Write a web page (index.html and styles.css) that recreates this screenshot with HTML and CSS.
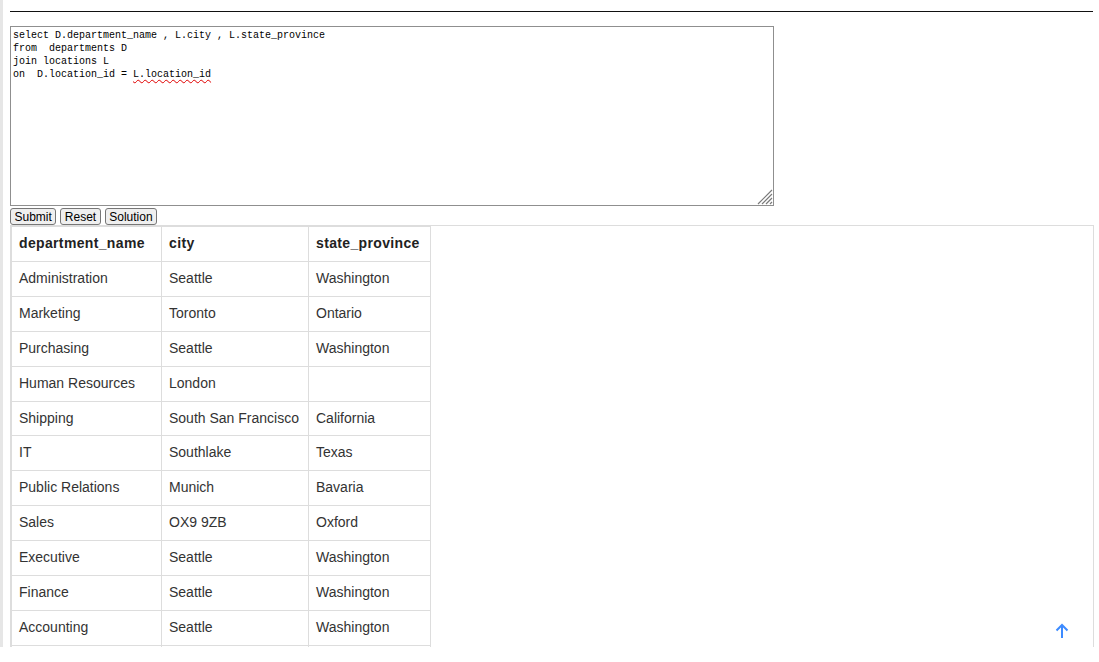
FILE: index.html
```html
<!DOCTYPE html>
<html>
<head>
<meta charset="utf-8">
<link rel="stylesheet" href="styles.css">
</head>
<body>
<div class="frame">
  <div class="rule"></div>
  <div class="editor-wrap">
    <div class="editor">select D.department_name , L.city , L.state_province
from  departments D
join locations L
on  D.location_id = <span class="spell">L.location_id</span></div>
    <svg class="grip" width="18" height="18" viewBox="0 0 18 18"><path d="M17 3L3 17M17 7L7 17M17 11L11 17M17 15L15 17" stroke="#7a7a7a" stroke-width="1.2" fill="none"/></svg>
  </div>
  <div class="buttons">
    <button class="btn">Submit</button>
    <button class="btn">Reset</button>
    <button class="btn">Solution</button>
  </div>
  <div class="results">
    <table class="grid">
      <colgroup><col class="c1"><col class="c2"><col class="c3"></colgroup>
      <thead>
        <tr><th>department_name</th><th>city</th><th>state_province</th></tr>
      </thead>
      <tbody>
        <tr><td>Administration</td><td>Seattle</td><td>Washington</td></tr>
        <tr><td>Marketing</td><td>Toronto</td><td>Ontario</td></tr>
        <tr><td>Purchasing</td><td>Seattle</td><td>Washington</td></tr>
        <tr><td>Human Resources</td><td>London</td><td></td></tr>
        <tr><td>Shipping</td><td>South San Francisco</td><td>California</td></tr>
        <tr><td>IT</td><td>Southlake</td><td>Texas</td></tr>
        <tr><td>Public Relations</td><td>Munich</td><td>Bavaria</td></tr>
        <tr><td>Sales</td><td>OX9 9ZB</td><td>Oxford</td></tr>
        <tr><td>Executive</td><td>Seattle</td><td>Washington</td></tr>
        <tr><td>Finance</td><td>Seattle</td><td>Washington</td></tr>
        <tr><td>Accounting</td><td>Seattle</td><td>Washington</td></tr>
        <tr><td>Treasury</td><td>Seattle</td><td>Washington</td></tr>
      </tbody>
    </table>
  </div>
  <div class="totop">
    <svg width="16" height="16" viewBox="0 0 16 16"><path d="M8 15V2M2.5 7.5L8 2l5.5 5.5" fill="none" stroke="#3d8bff" stroke-width="2"/></svg>
  </div>
</div>
</body>
</html>
```
FILE: styles.css
```css
html, body {
  margin: 0;
  padding: 0;
  background: #fff;
}
.frame {
  position: relative;
  height: 647px;
  overflow: hidden;
  border-left: 3px solid #e6e6e6;
  padding: 11px 5px 0 7px;
  box-sizing: border-box;
  width: 1099px;
  font-family: "Liberation Sans", Arial, sans-serif;
}
.rule {
  border-top: 1px solid #111;
  margin-bottom: 14px;
  width: 1083px;
}
.editor-wrap {
  position: relative;
  width: 764px;
  height: 180px;
}
.editor {
  width: 764px;
  height: 180px;
  box-sizing: border-box;
  border: 1px solid #8f8f8f;
  padding: 2px 2px;
  font-family: "Liberation Mono", "DejaVu Sans Mono", monospace;
  font-size: 10px;
  line-height: 13px;
  color: #000;
  white-space: pre;
  overflow: hidden;
}
.spell {
  text-decoration: underline wavy #e00000;
  text-decoration-thickness: 1px;
  text-underline-offset: 2px;
}
.grip {
  position: absolute;
  right: 1px;
  bottom: 1px;
}
.buttons {
  display: flex;
  gap: 4px;
  margin-top: 2px;
  height: 17px;
}
.btn {
  font-family: "Liberation Sans", Arial, sans-serif;
  font-size: 12px;
  height: 17px;
  padding: 0 3.5px;
  margin: 0;
  border: 1px solid #767676;
  border-radius: 3px;
  background: #efefef;
  color: #000;
  line-height: 14px;
}
.results {
  border: 1px solid #ddd;
  width: 1084px;
  box-sizing: border-box;
  height: 500px;
}
.grid {
  border-collapse: collapse;
  font-size: 14px;
  color: #333;
  table-layout: fixed;
  width: 419px;
}
.c1 { width: 150px; }
.c2 { width: 147px; }
.c3 { width: 122px; }
.grid th, .grid td {
  border: 1px solid #ddd;
  padding: 8px 7px;
  line-height: 17.9px;
  text-align: left;
  white-space: nowrap;
  overflow: hidden;
}
.grid th {
  color: #222;
  font-weight: bold;
  letter-spacing: 0.35px;
}
.totop {
  position: absolute;
  left: 1051px;
  top: 623px;
  width: 16px;
  height: 16px;
}
```
